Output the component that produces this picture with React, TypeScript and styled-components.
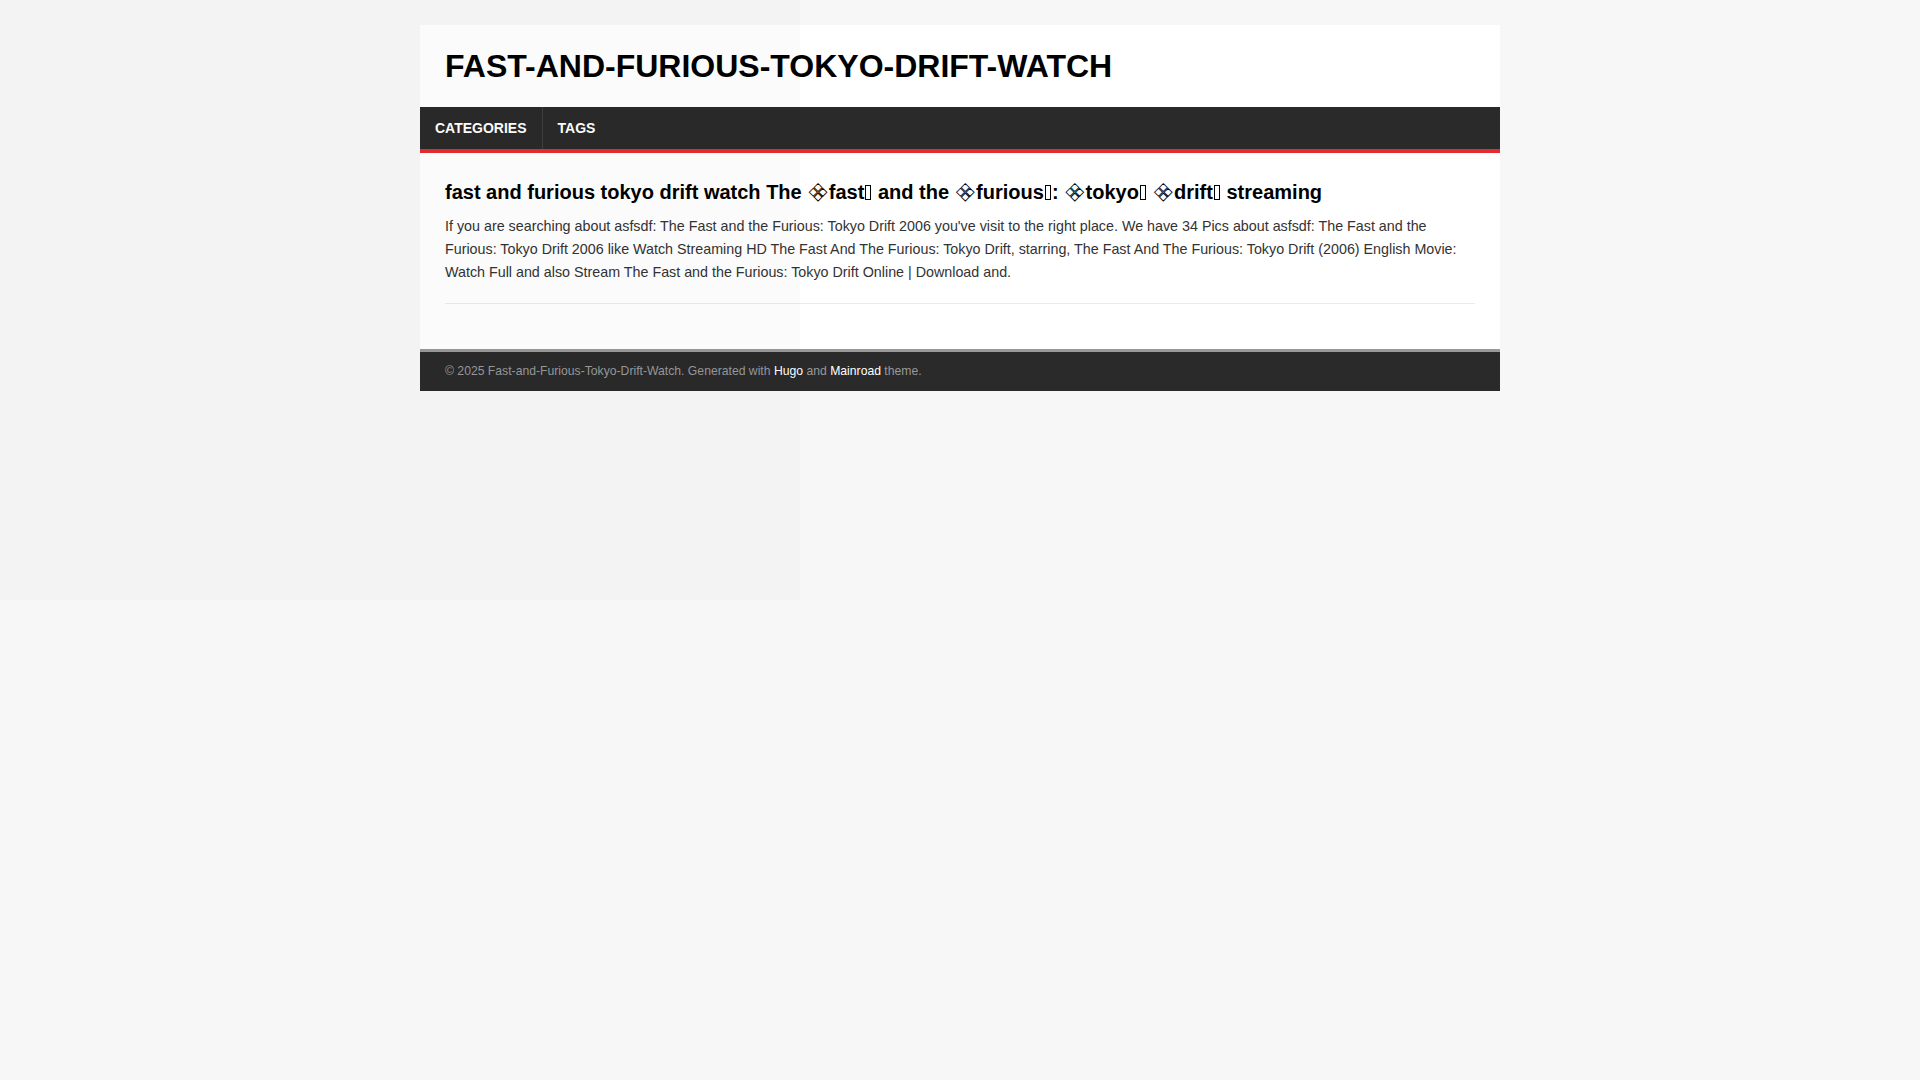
import styled, { createGlobalStyle } from 'styled-components';

const GlobalStyle = createGlobalStyle`
  body {
    margin: 0;
    background: #f7f7f7;
    font-family: "Liberation Sans", Arial, Helvetica, sans-serif;
    font-size: 16px;
    line-height: 1.6;
    color: #000;
  }
`;

const menuItems = ['Categories', 'Tags'];

// a word wrapped in the odd symbol + missing glyph seen in the scraped title
const Fancy = ({ word }: { word: string }) => (
  <>
    <Diamond>❖</Diamond>
    {word}
    <Tofu />
  </>
);

const App = () => {
  return (
    <>
      <GlobalStyle />
      <Container>
        <Header>
          <Logo>
            <LogoLink href="#">Fast-and-Furious-Tokyo-Drift-Watch</LogoLink>
          </Logo>
        </Header>
        <Menu>
          <MenuList>
            {menuItems.map((item, i) => (
              <MenuItem key={item} $first={i === 0}>
                <MenuLink href="#">{item}</MenuLink>
              </MenuItem>
            ))}
          </MenuList>
        </Menu>
        <Wrapper>
          <Post>
            <PostTitle>
              fast and furious tokyo drift watch The <Fancy word="fast" /> and the{' '}
              <Fancy word="furious" />: <Fancy word="tokyo" /> <Fancy word="drift" /> streaming
            </PostTitle>
            <PostText>
              If you are searching about asfsdf: The Fast and the Furious: Tokyo Drift 2006 you've visit to the right place. We have 34 Pics about asfsdf: The Fast and the Furious: Tokyo Drift 2006 like Watch Streaming HD The Fast And The Furious: Tokyo Drift, starring, The Fast And The Furious: Tokyo Drift (2006) English Movie: Watch Full and also Stream The Fast and the Furious: Tokyo Drift Online | Download and.
            </PostText>
          </Post>
        </Wrapper>
        <Footer>
          © 2025 Fast-and-Furious-Tokyo-Drift-Watch. Generated with <FooterLink href="#">Hugo</FooterLink> and <FooterLink href="#">Mainroad</FooterLink> theme.
        </Footer>
      </Container>
      <Shade />
    </>
  );
};

export default App;

const Container = styled.div`
  max-width: 1080px;
  margin: 25px auto;
`;

const Header = styled.header`
  background: #fff;
`;

const Logo = styled.div`
  padding: 25px;
  line-height: 1;
`;

const LogoLink = styled.a`
  display: inline-block;
  font-size: 32px;
  font-weight: 700;
  line-height: 1;
  text-transform: uppercase;
  color: #000;
  text-decoration: none;
  vertical-align: top;
`;

const Menu = styled.nav`
  background: #2a2a2a;
  border-bottom: 4px solid #e22d30;
`;

const MenuList = styled.ul`
  display: flex;
  margin: 0;
  padding: 0;
  list-style: none;
`;

const MenuItem = styled.li<{ $first: boolean }>`
  border-left: ${(p) => (p.$first ? 'none' : '1px solid rgba(255, 255, 255, 0.1)')};
`;

const MenuLink = styled.a`
  display: block;
  padding: 10px 15px;
  font-size: 14px;
  font-weight: 700;
  line-height: 1.6;
  color: #fff;
  text-transform: uppercase;
  text-decoration: none;
`;

const Wrapper = styled.main`
  background: #fff;
  padding: 25px;
`;

const Post = styled.article`
  padding-bottom: 20px;
  margin-bottom: 20px;
  border-bottom: 1px solid #ebebeb;
`;

const PostTitle = styled.h1`
  margin: 1px 0 10px;
  font-size: 20px;
  font-weight: 700;
  line-height: 1.3;
  color: #000;
`;

const Diamond = styled.span`
  font-family: "DejaVu Sans", sans-serif;
  font-weight: 400;
  font-size: 24px;
  line-height: 0;
  vertical-align: -2px;
  color: #fff;
  -webkit-text-stroke: 0.9px #000;
`;

const Tofu = styled.span`
  display: inline-block;
  width: 4px;
  height: 13px;
  margin: 0 1px;
  border: 1px solid #000;
  vertical-align: -1px;
`;

const PostText = styled.p`
  margin: 0;
  font-size: 14.3px;
  line-height: 22.6px;
  color: #333;
`;

const Footer = styled.footer`
  padding: 10px 25px;
  background: #2a2a2a;
  border-top: 3px solid #999;
  font-size: 12.2px;
  line-height: 19.2px;
  color: #999;
`;

const FooterLink = styled.a`
  color: #fff;
  text-decoration: none;
`;

// faint overlay over the top-left of the page
const Shade = styled.div`
  position: fixed;
  top: 0;
  left: 0;
  width: 800px;
  height: 600px;
  background: rgba(0, 0, 0, 0.014);
  pointer-events: none;
`;
